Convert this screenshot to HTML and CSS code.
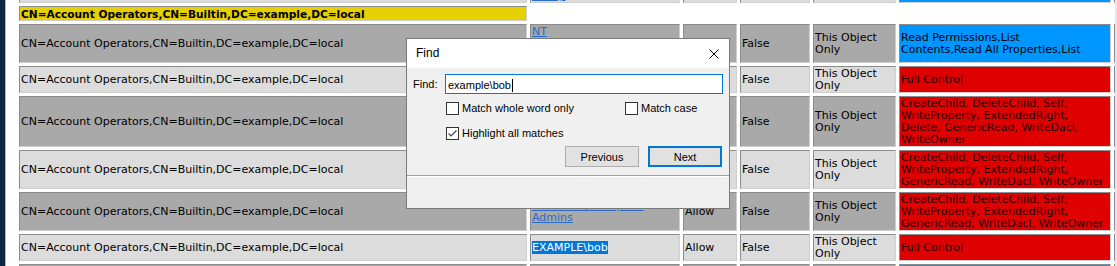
FILE: index.html
```html
<!DOCTYPE html>
<html lang="en">
<head>
<meta charset="UTF-8">
<title>ACL Report</title>
<link rel="stylesheet" href="styles.css">
</head>
<body>
<div class="screen">
  <div class="edge"></div>
  <div class="page">
    <table class="acl">
      <colgroup>
        <col class="c-dn"><col class="c-id"><col class="c-type"><col class="c-inh"><col class="c-apply"><col class="c-rights"><col class="c-more">
      </colgroup>
      <tr class="light">
        <td></td><td><a href="#">Group</a></td><td></td><td></td><td></td><td class="blue"></td><td class="blue"></td>
      </tr>
      <!-- Account Operators -->
      <tr>
        <th class="group">CN=Account Operators,CN=Builtin,DC=example,DC=local</th>
      </tr>
      <tr class="dark">
        <td>CN=Account Operators,CN=Builtin,DC=example,DC=local</td>
        <td><a href="#">NT AUTHORITY\ENTERPRISE DOMAIN CONTROLLERS</a></td>
        <td>Allow</td>
        <td>False</td>
        <td>This Object Only</td>
        <td class="blue">Read Permissions,List<br>Contents,Read All Properties,List</td>
        <td class="blue"></td>
      </tr>
      <tr class="light">
        <td>CN=Account Operators,CN=Builtin,DC=example,DC=local</td>
        <td><a href="#">EXAMPLE\Domain Admins</a></td>
        <td>Allow</td>
        <td>False</td>
        <td>This Object Only</td>
        <td class="red">Full Control</td>
        <td class="red"></td>
      </tr>
      <tr class="dark">
        <td>CN=Account Operators,CN=Builtin,DC=example,DC=local</td>
        <td><a href="#">NT AUTHORITY\SYSTEM</a></td>
        <td>Allow</td>
        <td>False</td>
        <td>This Object Only</td>
        <td class="red">CreateChild, DeleteChild, Self, WriteProperty, ExtendedRight, Delete, GenericRead, WriteDacl, WriteOwner</td>
        <td class="red"></td>
      </tr>
      <tr class="light">
        <td>CN=Account Operators,CN=Builtin,DC=example,DC=local</td>
        <td><a href="#">EXAMPLE\Domain Admins</a></td>
        <td>Allow</td>
        <td>False</td>
        <td>This Object Only</td>
        <td class="red">CreateChild, DeleteChild, Self, WriteProperty, ExtendedRight, GenericRead, WriteDacl, WriteOwner</td>
        <td class="red"></td>
      </tr>
      <tr class="dark">
        <td>CN=Account Operators,CN=Builtin,DC=example,DC=local</td>
        <td><a href="#">EXAMPLE\Enterprise Admins</a></td>
        <td>Allow</td>
        <td>False</td>
        <td>This Object Only</td>
        <td class="red">CreateChild, DeleteChild, Self, WriteProperty, ExtendedRight, GenericRead, WriteDacl, WriteOwner</td>
        <td class="red"></td>
      </tr>
      <tr class="light">
        <td>CN=Account Operators,CN=Builtin,DC=example,DC=local</td>
        <td><a href="#" class="sel">EXAMPLE\bob</a></td>
        <td>Allow</td>
        <td>False</td>
        <td>This Object Only</td>
        <td class="red">Full Control</td>
        <td class="red"></td>
      </tr>
      <tr class="dark">
        <td>&nbsp;</td><td></td><td></td><td></td><td></td><td class="blue"></td><td class="blue"></td>
      </tr>
    </table>
  </div>
  <div class="scroll"></div>
</div>

<!-- Find dialog -->
<div class="find">
  <div class="find-title">
    <span>Find</span>
    <svg class="close" width="10" height="10" viewBox="0 0 10 10"><path d="M0.5 0.5L9.5 9.5M9.5 0.5L0.5 9.5" stroke="#000" stroke-width="1" fill="none"/></svg>
  </div>
  <div class="find-body">
    <div class="find-row">
      <span class="find-label">Find:</span>
      <div class="find-input">example\bob<span class="caret"></span></div>
    </div>
    <div class="find-opts">
      <label class="chk"><span class="box"></span>Match whole word only</label>
      <label class="chk"><span class="box"></span>Match case</label>
      <label class="chk"><span class="box"><svg width="11" height="11" viewBox="0 0 11 11"><path d="M1.5 5.5L4 8L9.5 2.5" stroke="#444" stroke-width="1.2" fill="none"/></svg></span>Highlight all matches</label>
    </div>
    <div class="find-buttons">
      <button class="btn">Previous</button>
      <button class="btn default">Next</button>
    </div>
  </div>
  <div class="find-status"></div>
</div>
</body>
</html>
```

FILE: styles.css
```css
body {
    margin: 0;
    font-family: "DejaVu Sans", Verdana, sans-serif;
    font-size: 11px;
    line-height: 12px;
    color: #000;
    background: #fff;
}

.screen {
display: flex;
height: 266px;
overflow: hidden;
}

.edge {
flex: none;
width: 5px;
background: #0f2442;
border-right: 1px solid #b0b8c2;
}

.page {
flex: 1;
overflow: hidden;
padding-left: 10px;
}

.scroll {
flex: none;
width: 2px;
background: #e6e6e6;
}

/* report table */
.acl {
table-layout: fixed;
width: 1301px;
border-spacing: 3px;
margin-top: -15px;
}

.c-dn { width: 508px; }
.c-id { width: 150px; }
.c-type { width: 54px; }
.c-inh { width: 70px; }
.c-apply { width: 83px; }
.c-rights { width: 212px; }
.c-more { width: 200px; }

.acl td, .acl th {
padding: 1px 1px 0;
border: 1px solid;
border-color: #8c8c8c #cfcfcf #cfcfcf #8c8c8c;
vertical-align: middle;
text-align: left;
}

.acl th.group {
background: #e6d000;
font-weight: bold;
font-size: 10.6px;
}

.dark td { background: #a9a9a9; }
.light td { background: #dcdcdc; }
.acl td.blue { background: #0096ff; }
.acl td.red { background: #df0000; color: #1a0000; }

.acl a {
color: #2a6ac8;
text-decoration: underline;
}

.acl a.sel {
background: #0078d7;
color: #fff;
text-decoration: none;
}

/* find dialog */
.find {
position: absolute;
left: 406px;
top: 38px;
width: 324px;
height: 171px;
box-sizing: border-box;
border: 1px solid #7a7a7a;
background: #f0f0f0;
display: flex;
flex-direction: column;
font-family: "Liberation Sans", Arial, sans-serif;
font-size: 11px;
line-height: 13px;
color: #000;
}

.find-title {
flex: none;
height: 29px;
background: #fff;
display: flex;
align-items: center;
justify-content: space-between;
padding: 0 10px 0 9px;
font-size: 12px;
}

.find-body {
flex: none;
height: 108px;
box-sizing: border-box;
padding: 6px 7px 0 6px;
border-bottom: 1px solid #a0a0a0;
}

.find-row {
display: flex;
align-items: center;
}

.find-label {
width: 32px;
}

.find-input {
flex: 1;
height: 20px;
box-sizing: border-box;
border: 1px solid #0078d7;
background: #fff;
padding: 2px 2px 0;
display: flex;
align-items: center;
margin-right: -1px;
}

.caret {
width: 1px;
height: 13px;
background: #000;
margin-left: 1px;
}

.find-opts {
display: grid;
grid-template-columns: 179px auto;
row-gap: 12px;
margin-top: 8px;
padding-left: 33px;
}

.chk {
display: flex;
align-items: center;
gap: 3px;
height: 13px;
}

.box {
width: 13px;
height: 13px;
box-sizing: border-box;
border: 1px solid #333;
background: #fff;
display: flex;
align-items: center;
justify-content: center;
}

.find-buttons {
display: flex;
justify-content: flex-end;
gap: 9px;
margin-top: 6px;
}

.btn {
width: 74px;
height: 21px;
box-sizing: border-box;
border: 1px solid #adadad;
background: #e1e1e1;
font-family: "Liberation Sans", Arial, sans-serif;
font-size: 11px;
color: #000;
padding: 0;
}

.btn.default {
border: 2px solid #0078d7;
}

.find-status {
flex: 1;
border-top: 1px solid #fff;
}
```
